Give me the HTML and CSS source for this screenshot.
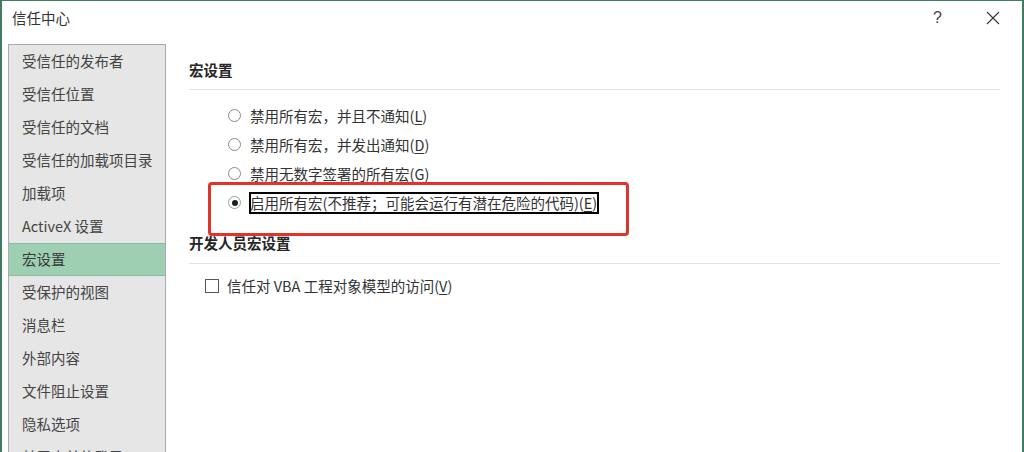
FILE: index.html
```html
<!DOCTYPE html>
<html lang="zh-CN">
<head>
<meta charset="utf-8">
<title>信任中心</title>
<link rel="stylesheet" href="styles.css">
</head>
<body>
<div class="window">
  <div class="titlebar">
    <span class="title">信任中心</span>
    <div class="controls">
      <span class="help">?</span>
      <svg class="close" width="14" height="14" viewBox="0 0 14 14"><path d="M1 1 L13 13 M13 1 L1 13" stroke="#333" stroke-width="1.1" fill="none"/></svg>
    </div>
  </div>
  <div class="main">
    <ul class="nav">
      <li>受信任的发布者</li>
      <li>受信任位置</li>
      <li>受信任的文档</li>
      <li>受信任的加载项目录</li>
      <li>加载项</li>
      <li>ActiveX 设置</li>
      <li class="selected">宏设置</li>
      <li>受保护的视图</li>
      <li>消息栏</li>
      <li>外部内容</li>
      <li>文件阻止设置</li>
      <li>隐私选项</li>
      <li>基于表单的登录</li>
    </ul>
    <div class="content">
      <h2 class="section-title">宏设置</h2>
      <div class="options">
        <div class="option"><span class="radio"></span><span class="label">禁用所有宏，并且不通知(<u>L</u>)</span></div>
        <div class="option"><span class="radio"></span><span class="label">禁用所有宏，并发出通知(<u>D</u>)</span></div>
        <div class="option"><span class="radio"></span><span class="label">禁用无数字签署的所有宏(<u>G</u>)</span></div>
        <div class="option"><span class="radio checked"></span><span class="label focused">启用所有宏(不推荐；可能会运行有潜在危险的代码)(<u>E</u>)</span></div>
      </div>
      <h2 class="section-title second">开发人员宏设置</h2>
      <div class="check-row"><span class="checkbox"></span><span class="label">信任对 VBA 工程对象模型的访问(<u>V</u>)</span></div>
    </div>
  </div>
  <div class="annotation"></div>
</div>
</body>
</html>
```

FILE: styles.css
```css
html, body {
  margin: 0;
  padding: 0;
  width: 1024px;
  height: 452px;
  overflow: hidden;
  background: #ffffff;
}

body {
  font-family: "Noto Sans CJK SC", "Noto Sans", sans-serif;
  font-size: 14.5px;
  color: #333333;
}

.window {
  position: relative;
  box-sizing: border-box;
  width: 1024px;
  height: 500px;
  border: 2px solid #3f7b5e;
  border-top-width: 1px;
  display: flex;
  flex-direction: column;
  background: #ffffff;
}

.titlebar {
  height: 33px;
  display: flex;
  align-items: center;
  justify-content: space-between;
  padding-left: 10px;
  flex: none;
}

.title {
  font-size: 14.5px;
  color: #333333;
  line-height: 20px;
}

.controls {
  display: flex;
  align-items: center;
  gap: 44px;
  padding-right: 22px;
}

.help {
  font-family: "Liberation Sans", sans-serif;
  font-size: 16px;
  color: #444444;
  line-height: 20px;
}

.close {
  display: block;
}

.main {
  display: flex;
  margin-top: 10px;
  flex: 1;
}

.nav {
  list-style: none;
  margin: 0 0 0 6px;
  padding: 0;
  width: 156px;
  background: #e6e6e6;
  border: 1px solid #ababab;
  flex: none;
}

.nav li {
  height: 33px;
  line-height: 31px;
  padding-left: 13px;
  color: #444444;
  white-space: nowrap;
  box-sizing: border-box;
}

.nav li.selected {
  background: #9fcfb3;
  border-top: 1px solid #86bd9d;
  border-bottom: 1px solid #86bd9d;
  line-height: 30px;
  color: #3a3a3a;
}

.content {
  flex: 1;
  padding: 0 22px 0 23px;
}

.section-title {
  margin: 16px 0 0 0;
  padding-bottom: 9px;
  font-size: 14.5px;
  line-height: 20px;
  font-weight: bold;
  color: #262626;
  border-bottom: 1px solid #e3e3e3;
}

.section-title.second {
  margin-top: 16px;
  padding-bottom: 10px;
}

.options {
  margin-top: 11px;
  padding-left: 39px;
}

.option {
  height: 29px;
  display: flex;
  align-items: center;
}

.radio {
  box-sizing: border-box;
  width: 13px;
  height: 13px;
  border: 1px solid #8a8a8a;
  border-radius: 50%;
  background: #ffffff;
  margin-right: 9px;
  flex: none;
  display: flex;
  align-items: center;
  justify-content: center;
}

.radio.checked {
  border-color: #8aa898;
}

.radio.checked::after {
  content: "";
  width: 6px;
  height: 6px;
  border-radius: 50%;
  background: #1e1e1e;
}

.label {
  line-height: 20px;
  color: #333333;
  white-space: nowrap;
}

.label u {
  text-decoration: underline;
  text-underline-offset: 2px;
}

.label.focused {
  outline: 2px solid #000000;
  outline-offset: -1px;
  padding-right: 1px;
}

.check-row {
  margin-top: 7px;
  padding-left: 16px;
  height: 29px;
  display: flex;
  align-items: center;
}

.checkbox {
  box-sizing: border-box;
  width: 14px;
  height: 14px;
  border: 1px solid #555555;
  background: #ffffff;
  margin-right: 8px;
  flex: none;
}

.annotation {
  position: absolute;
  left: 206px;
  top: 181px;
  width: 421px;
  height: 54px;
  box-sizing: border-box;
  border: 3px solid #e6302a;
  border-radius: 4px;
  pointer-events: none;
}
```
